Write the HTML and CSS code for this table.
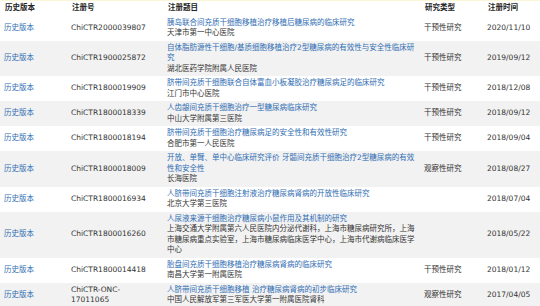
FILE: index.html
```html
<!DOCTYPE html>
<html lang="zh-CN">
<head>
<meta charset="utf-8">
<link rel="stylesheet" href="styles.css">
</head>
<body>
<div class="topline"></div>
<table class="trials">
  <colgroup>
    <col class="c1"><col class="c2"><col class="c3"><col class="c4"><col class="c5">
  </colgroup>
  <thead>
    <tr><th>历史版本</th><th>注册号</th><th>注册题目</th><th>研究类型</th><th>注册时间</th></tr>
  </thead>
  <tbody>
    <tr>
      <td><a href="#">历史版本</a></td><td class="regno">ChiCTR2000039807</td>
      <td><a href="#">胰岛联合间充质干细胞移植治疗移植后糖尿病的临床研究</a><br>天津市第一中心医院</td>
      <td>干预性研究</td><td>2020/11/10</td>
    </tr>
    <tr>
      <td><a href="#">历史版本</a></td><td class="regno">ChiCTR1900025872</td>
      <td><a href="#">自体脂肪源性干细胞/基质细胞移植治疗2型糖尿病的有效性与安全性临床研究</a><br>湖北医药学院附属人民医院</td>
      <td>干预性研究</td><td>2019/09/12</td>
    </tr>
    <tr>
      <td><a href="#">历史版本</a></td><td class="regno">ChiCTR1800019909</td>
      <td><a href="#">脐带间充质干细胞联合自体富血小板凝胶治疗糖尿病足的临床研究</a><br>江门市中心医院</td>
      <td>干预性研究</td><td>2018/12/08</td>
    </tr>
    <tr>
      <td><a href="#">历史版本</a></td><td class="regno">ChiCTR1800018339</td>
      <td><a href="#">人齿龈间充质干细胞治疗一型糖尿病临床研究</a><br>中山大学附属第三医院</td>
      <td>干预性研究</td><td>2018/09/12</td>
    </tr>
    <tr>
      <td><a href="#">历史版本</a></td><td class="regno">ChiCTR1800018194</td>
      <td><a href="#">脐带间充质干细胞治疗糖尿病足的安全性和有效性研究</a><br>合肥市第一人民医院</td>
      <td>干预性研究</td><td>2018/09/04</td>
    </tr>
    <tr>
      <td><a href="#">历史版本</a></td><td class="regno">ChiCTR1800018009</td>
      <td><a href="#">开放、单臂、单中心临床研究评价 牙髓间充质干细胞治疗2型糖尿病的有效性和安全性</a><br>长海医院</td>
      <td>观察性研究</td><td>2018/08/27</td>
    </tr>
    <tr>
      <td><a href="#">历史版本</a></td><td class="regno">ChiCTR1800016934</td>
      <td><a href="#">人脐带间充质干细胞注射液治疗糖尿病肾病的开放性临床研究</a><br>北京大学第三医院</td>
      <td></td><td>2018/07/04</td>
    </tr>
    <tr>
      <td><a href="#">历史版本</a></td><td class="regno">ChiCTR1800016260</td>
      <td><a href="#">人尿液来源干细胞治疗糖尿病小鼠作用及其机制的研究</a><br>上海交通大学附属第六人民医院内分泌代谢科，上海市糖尿病研究所，上海市糖尿病重点实验室，上海市糖尿病临床医学中心，上海市代谢病临床医学中心</td>
      <td></td><td>2018/05/22</td>
    </tr>
    <tr>
      <td><a href="#">历史版本</a></td><td class="regno">ChiCTR1800014418</td>
      <td><a href="#">胎盘间充质干细胞移植治疗糖尿病肾病的临床研究</a><br>南昌大学第一附属医院</td>
      <td>干预性研究</td><td>2018/01/12</td>
    </tr>
    <tr>
      <td><a href="#">历史版本</a></td><td class="regno">ChiCTR-ONC-17011065</td>
      <td><a href="#">人脐带间充质干细胞移植 治疗糖尿病肾病的初步临床研究</a><br>中国人民解放军第三军医大学第一附属医院肾科</td>
      <td>观察性研究</td><td>2017/04/05</td>
    </tr>
  </tbody>
</table>
</body>
</html>
```
FILE: styles.css
```css
html, body {
  margin: 0;
  padding: 0;
  background: #ffffff;
}
body {
  font-family: "DejaVu Sans", "Noto Sans CJK SC", sans-serif;
  font-size: 7.5px;
  line-height: 10.5px;
  color: #333333;
  overflow: hidden;
}
.topline {
  height: 1px;
  background: #fbf6d6;
}
.trials {
  width: 540px;
  border-collapse: collapse;
  table-layout: fixed;
}
.c1 { width: 67px; }
.c2 { width: 96px; }
.c3 { width: 257px; }
.c4 { width: 63px; }
.c5 { width: 57px; }
.trials th {
  text-align: left;
  font-weight: bold;
  padding: 2px 2px 2px 5px;
  height: 10.5px;
  color: #222222;
  background: #ffffff;
}
.trials td {
  padding: 2px 2px 2px 4px;
  vertical-align: middle;
}
.trials td.regno {
  padding-right: 10px;
}
.trials tbody tr:nth-child(even) td {
  background: #f2f2f2;
}
.trials a {
  color: #2f6db3;
  text-decoration: none;
}
```
